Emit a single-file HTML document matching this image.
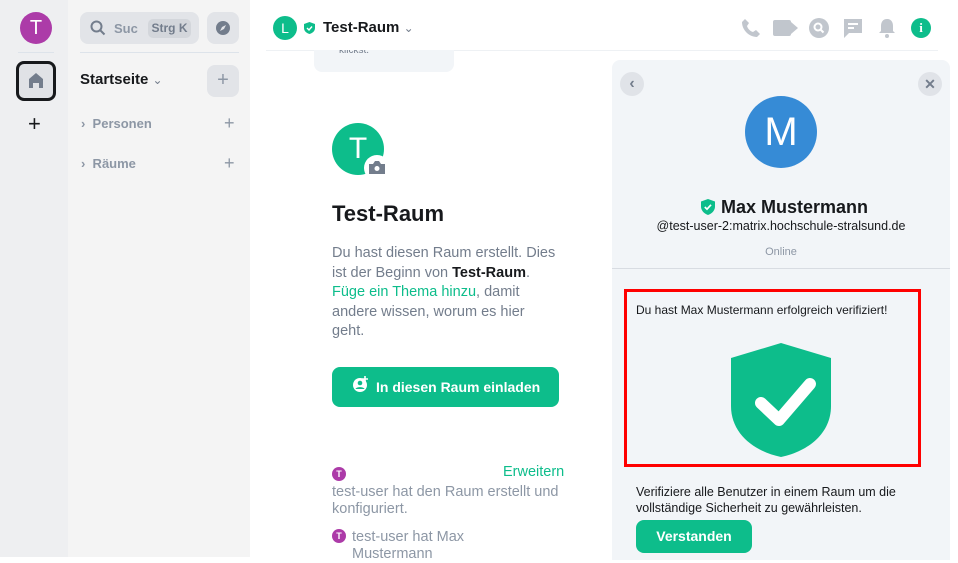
<!DOCTYPE html>
<html><head><meta charset="utf-8"><style>
*{box-sizing:border-box;margin:0;padding:0}
body{width:958px;height:557px;overflow:hidden;background:#fff;font-family:"Liberation Sans",sans-serif;position:relative;color:#17191c}
.a{position:absolute}
.circ{border-radius:50%;color:#fff;display:flex;align-items:center;justify-content:center}
</style></head><body>
<div class="a" style="left:0;top:0;width:68px;height:557px;background:#eeeff1"></div>
<div class="a circ" style="left:20px;top:12px;width:32px;height:32px;background:#ac3ba8;font-size:20px">T</div>
<div class="a" style="left:18px;top:52px;width:36px;height:1px;background:#dde3ea"></div>
<div class="a" style="left:16px;top:61px;width:40px;height:40px;border:3px solid #17191c;border-radius:8px;background:#e0e2e6"></div>
<svg class="a" style="left:28px;top:72px" width="16" height="17" viewBox="0 0 16 17"><path d="M1 7L8 1l7 6v9h-4v-5H5v5H1z" fill="#737d8c"/></svg>
<div class="a" style="left:28px;top:113px;font-size:22px;line-height:22px">+</div>
<div class="a" style="left:68px;top:0;width:182px;height:557px;background:#f4f4f4"></div>
<div class="a" style="left:80px;top:12px;width:119px;height:32px;background:#e2e4e8;border-radius:8px"></div>
<svg class="a" style="left:90px;top:20px" width="16" height="16" viewBox="0 0 16 16"><circle cx="6.5" cy="6.5" r="5" stroke="#737d8c" stroke-width="2" fill="none"/><path d="M10 10l4.5 4.5" stroke="#737d8c" stroke-width="2"/></svg>
<div class="a" style="left:114px;top:21px;font-size:13px;color:#8d97a5;font-weight:bold">Suc</div>
<div class="a" style="left:148px;top:19px;width:43px;height:19px;background:#d3d6db;border-radius:5px;font-size:12px;color:#737d8c;font-weight:bold;text-align:center;line-height:19px">Strg K</div>
<div class="a" style="left:207px;top:12px;width:32px;height:32px;background:#e2e4e8;border-radius:8px"></div>
<svg class="a" style="left:215px;top:20px" width="16" height="16" viewBox="0 0 16 16"><circle cx="8" cy="8" r="7" fill="#737d8c"/><path d="M11 5L9 9 5 11 7 7z" fill="#e2e4e8"/></svg>
<div class="a" style="left:80px;top:52px;width:159px;height:1px;background:#dde3ea"></div>
<div class="a" style="left:80px;top:71px;font-size:15px;font-weight:bold">Startseite <span style="color:#737d8c;font-weight:normal;font-size:12px">⌄</span></div>
<div class="a" style="left:207px;top:65px;width:32px;height:32px;background:#e2e4e8;border-radius:8px;color:#8d97a5;font-size:20px;text-align:center;line-height:30px">+</div>
<div class="a" style="left:81px;top:116px;font-size:13px;color:#8d97a5;font-weight:bold">›&nbsp;&nbsp;Personen</div>
<div class="a" style="left:224px;top:113px;font-size:18px;color:#8d97a5">+</div>
<div class="a" style="left:81px;top:156px;font-size:13px;color:#8d97a5;font-weight:bold">›&nbsp;&nbsp;Räume</div>
<div class="a" style="left:224px;top:153px;font-size:18px;color:#8d97a5">+</div>
<div class="a circ" style="left:273px;top:16px;width:24px;height:24px;background:#0dbd8b;font-size:14px">L</div>
<svg class="a" style="left:304px;top:22px" width="11" height="12" viewBox="0 0 11 12"><path d="M5.5 0L11 2v4c0 3-2.5 5.2-5.5 6C2.5 11.2 0 9 0 6V2z" fill="#0dbd8b"/><path d="M3 6l2 2 3-3.5" stroke="#fff" stroke-width="1.4" fill="none"/></svg>
<div class="a" style="left:323px;top:19px;font-size:15px;font-weight:bold">Test-Raum <span style="color:#737d8c;font-weight:normal;font-size:12px">⌄</span></div>
<div class="a" style="left:266px;top:50px;width:672px;height:1px;background:#eef1f4"></div>
<svg class="a" style="left:741px;top:18px" width="20" height="20" viewBox="0 0 20 20"><path d="M4 1l4 4-2 3c1 3 3 5 6 6l3-2 4 4-3 3C8 19 1 12 1 4z" fill="#c1c6cd"/></svg>
<div class="a" style="left:773px;top:20px;width:18px;height:16px;background:#c1c6cd;border-radius:2px"></div>
<div class="a" style="left:791px;top:22px;width:0;height:0;border-top:6px solid transparent;border-bottom:6px solid transparent;border-right:7px solid #c1c6cd;transform:scaleX(-1)"></div>
<svg class="a" style="left:809px;top:18px" width="20" height="20" viewBox="0 0 20 20"><circle cx="10" cy="10" r="10" fill="#c1c6cd"/><circle cx="9" cy="9" r="3.5" stroke="#fff" stroke-width="2" fill="none"/><path d="M11.5 11.5l3 3" stroke="#fff" stroke-width="2"/></svg>
<svg class="a" style="left:843px;top:18px" width="20" height="21" viewBox="0 0 20 21"><path d="M1 1h18v14H6l-5 5z" fill="#c1c6cd"/><path d="M5 6h10M5 10h6" stroke="#fff" stroke-width="2"/></svg>
<svg class="a" style="left:878px;top:18px" width="18" height="20" viewBox="0 0 18 20"><path d="M9 1c4 0 6 3 6 7v5l2 2H1l2-2V8c0-4 2-7 6-7z" fill="#c1c6cd"/><circle cx="9" cy="18" r="2" fill="#c1c6cd"/></svg>
<div class="a circ" style="left:911px;top:18px;width:20px;height:20px;background:#0dbd8b;font-size:13px;font-weight:bold;font-family:'Liberation Serif',serif">i</div>
<div class="a" style="left:314px;top:50px;width:140px;height:22px;background:#f2f5f8;border-radius:0 0 8px 8px;font-size:10px;color:#737d8c;text-align:center;line-height:6px;overflow:hidden"><span style="position:relative;top:-2px;left:-30px">klickst.</span></div>
<div class="a circ" style="left:332px;top:123px;width:52px;height:52px;background:#0dbd8b;font-size:30px">T</div>
<div class="a circ" style="left:364px;top:155px;width:26px;height:26px;background:#fff"></div>
<svg class="a" style="left:369px;top:161px" width="16" height="13" viewBox="0 0 16 13"><path d="M0 3h4l2-3h4l2 3h4v10H0z" fill="#737d8c"/><circle cx="8" cy="7.5" r="2.5" fill="#fff"/></svg>
<div class="a" style="left:332px;top:201px;font-size:22px;font-weight:bold">Test-Raum</div>
<div class="a" style="left:332px;top:244px;width:260px;font-size:14.5px;line-height:19.5px;color:#737d8c;white-space:nowrap">Du hast diesen Raum erstellt. Dies<br>ist der Beginn von <b style="color:#17191c">Test-Raum</b>.<br><span style="color:#0dbd8b">Füge ein Thema hinzu</span>, damit<br>andere wissen, worum es hier<br>geht.</div>
<div class="a" style="left:332px;top:367px;width:227px;height:40px;background:#0dbd8b;border-radius:8px;color:#fff;font-size:14px;font-weight:bold;line-height:40px;padding-left:44px">In diesen Raum einladen</div>
<svg class="a" style="left:352px;top:375px" width="18" height="18" viewBox="0 0 18 18"><circle cx="8" cy="10" r="7" fill="#fff"/><circle cx="8" cy="8" r="2.3" fill="#0dbd8b"/><path d="M3.5 14c1-2.5 8-2.5 9 0" fill="#0dbd8b"/><path d="M13 1v6M10 4h6" stroke="#fff" stroke-width="1.6"/></svg>
<div class="a circ" style="left:332px;top:467px;width:14px;height:14px;background:#ac3ba8;font-size:9px;font-weight:bold">T</div>
<div class="a" style="left:503px;top:464px;font-size:14.5px;color:#0dbd8b">Erweitern</div>
<div class="a" style="left:332px;top:484px;width:250px;font-size:14.5px;line-height:17px;color:#8d97a5;white-space:nowrap">test-user hat den Raum erstellt und<br>konfiguriert.</div>
<div class="a circ" style="left:332px;top:529px;width:14px;height:14px;background:#ac3ba8;font-size:9px;font-weight:bold">T</div>
<div class="a" style="left:352px;top:529px;font-size:14.5px;line-height:17px;color:#8d97a5">test-user hat Max<br>Mustermann</div>
<div class="a" style="left:612px;top:60px;width:338px;height:500px;background:#f2f5f8;border-radius:8px 8px 0 0"></div>
<div class="a circ" style="left:620px;top:72px;width:24px;height:24px;background:#e0e3e8;color:#737d8c;font-size:16px;font-weight:bold;line-height:22px">‹</div>
<div class="a circ" style="left:918px;top:72px;width:24px;height:24px;background:#e0e3e8;color:#737d8c;font-size:14px;font-weight:bold">✕</div>
<div class="a circ" style="left:745px;top:96px;width:72px;height:72px;background:#368bd6;font-size:40px">M</div>
<svg class="a" style="left:701px;top:199px" width="14" height="16" viewBox="0 0 14 16"><path d="M7 0l7 2.5v5C14 11.5 11 14.5 7 16 3 14.5 0 11.5 0 7.5v-5z" fill="#0dbd8b"/><path d="M3.8 8l2.2 2.2L10 5.8" stroke="#fff" stroke-width="1.7" fill="none"/></svg>
<div class="a" style="left:721px;top:197px;font-size:18px;font-weight:bold">Max Mustermann</div>
<div class="a" style="left:612px;top:219px;width:338px;text-align:center;font-size:12.5px;color:#17191c">@test-user-2:matrix.hochschule-stralsund.de</div>
<div class="a" style="left:612px;top:246px;width:338px;text-align:center;font-size:11px;color:#8d97a5">Online</div>
<div class="a" style="left:612px;top:268px;width:338px;height:1px;background:#d8dce2"></div>
<div class="a" style="left:624px;top:289px;width:297px;height:178px;border:3px solid #f00"></div>
<div class="a" style="left:636px;top:303px;font-size:12px;color:#17191c">Du hast Max Mustermann erfolgreich verifiziert!</div>
<svg class="a" style="left:731px;top:343px" width="100" height="115" viewBox="0 0 100 115"><path d="M50 0L100 15V63C100 90 78 108 50 114 22 108 0 90 0 63V15z" fill="#0dbd8b"/><path d="M30 60l18 17 31-36" stroke="#fff" stroke-width="12" stroke-linecap="round" stroke-linejoin="round" fill="none"/></svg>
<div class="a" style="left:636px;top:485px;width:280px;font-size:12.5px;line-height:15.5px;color:#17191c">Verifiziere alle Benutzer in einem Raum um die vollständige Sicherheit zu gewährleisten.</div>
<div class="a" style="left:636px;top:520px;width:116px;height:33px;background:#0dbd8b;border-radius:8px;color:#fff;font-size:14px;font-weight:bold;text-align:center;line-height:33px">Verstanden</div>
</body></html>
